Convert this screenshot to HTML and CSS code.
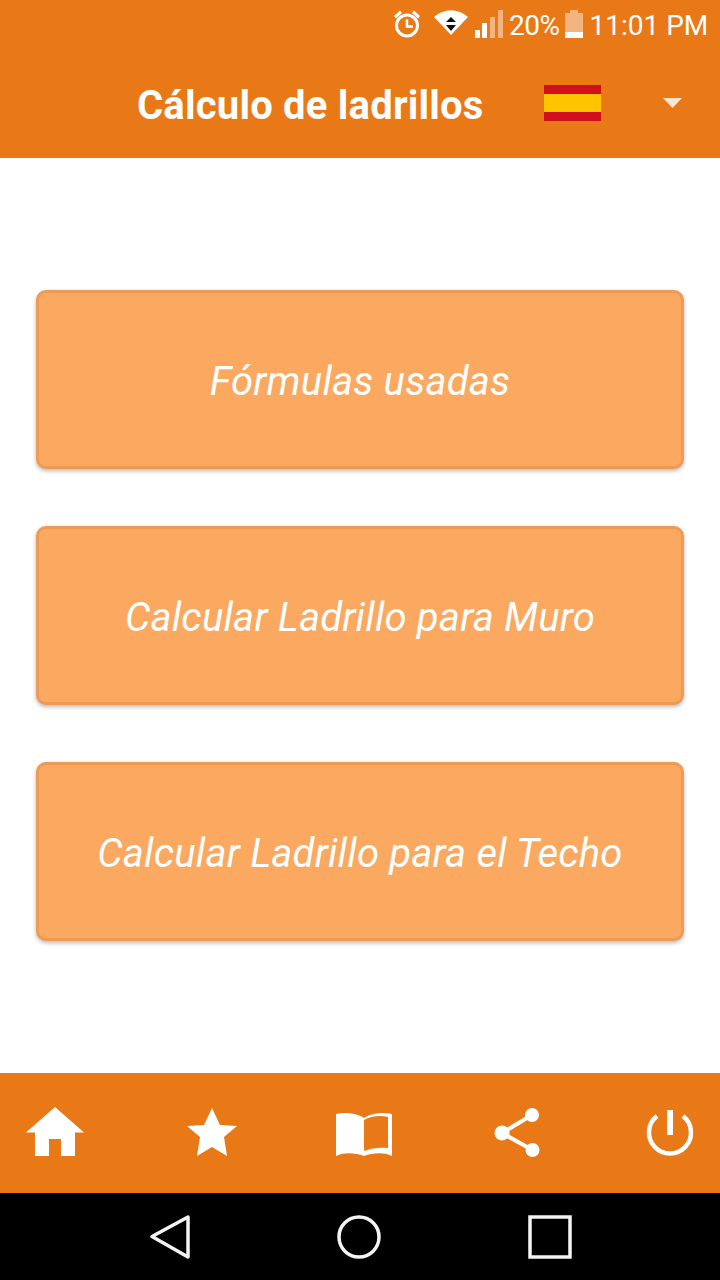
FILE: index.html
```html
<!DOCTYPE html>
<html lang="es">
<head>
<meta charset="utf-8">
<title>Cálculo de ladrillos</title>
<link rel="stylesheet" href="styles.css">
</head>
<body>
<div class="screen">
  <header class="header">
    <div class="status">
      <svg class="st-alarm" width="28" height="28" viewBox="0 0 28 28"><circle cx="14" cy="15.500" r="10.500" fill="none" stroke="#fff" stroke-width="3"/><path d="M14 9.500v7h6" fill="none" stroke="#fff" stroke-width="2.500"/><path d="M1 6 7 .5 9 3 3 8.500ZM27 6 21 .5 19 3 25 8.500Z" fill="#fff"/></svg>
      <svg class="st-wifi" width="34" height="26" viewBox="0 0 34 26"><path d="M0 7C10-2 24-2 34 7L17 25Z" fill="#fff"/><path d="M17 7l5 5H12ZM17 21l-5-6h10Z" fill="#111"/></svg>
      <svg class="st-signal" width="28" height="28" viewBox="0 0 28 28"><path d="M0 20h5v8H0ZM7 13h5v15H7Z" fill="#fff"/><path d="M15 7h5v21h-5ZM23 0h5v28h-5Z" fill="#fff" fill-opacity=".45"/></svg>
      <span class="st-text st-pct">20%</span>
      <svg class="st-battery" width="18" height="28" viewBox="0 0 18 28"><path d="M5 0h8v3h5v19H0V3h5Z" fill="#fff" fill-opacity=".45"/><path d="M0 22h18v6H0Z" fill="#fff"/></svg>
      <span class="st-text st-time">11:01 PM</span>
    </div>
    <div class="toolbar">
      <h1 class="title">Cálculo de ladrillos</h1>
      <div class="flag"><div class="flag-red"></div><div class="flag-yellow"></div><div class="flag-red"></div></div>
      <svg class="caret" width="19" height="10" viewBox="0 0 19 10"><path d="M0 0h19L9.500 10Z" fill="#fbe6d4"/></svg>
    </div>
  </header>
  <main class="main">
    <button class="action">Fórmulas usadas</button>
    <button class="action">Calcular Ladrillo para Muro</button>
    <button class="action">Calcular Ladrillo para el Techo</button>
  </main>
  <nav class="tabs">
    <svg class="tab" width="60" height="60" viewBox="0 0 60 60"><path fill-rule="evenodd" d="M30 4 59 29.500H50V53H10V29.500H1ZM24 36V53H36V36Z" fill="#fff"/></svg>
    <svg class="tab" width="60" height="60" viewBox="0 0 60 60"><path d="M34 5 42 22 59 23 46 34 49 53 34 44 19 53 22 34 9 23 26 22Z" fill="#fff"/></svg>
    <svg class="tab" width="60" height="60" viewBox="0 0 60 60"><path fill-rule="evenodd" d="M5 11C14 9 26 10 33 15 40 10 52 9 61 11V53C52 49 42 50 33 53 24 50 14 49 5 53ZM33 17V48C40 45 49 44 57 45V14C49 12 40 13 33 17Z" fill="#fff"/></svg>
    <svg class="tab" width="60" height="60" viewBox="0 0 60 60"><path d="M48 12 18 30 48.500 47" fill="none" stroke="#fff" stroke-width="4"/><circle cx="48" cy="12" r="7" fill="#fff"/><circle cx="18" cy="30" r="7.500" fill="#fff"/><circle cx="48.500" cy="47" r="7" fill="#fff"/></svg>
    <svg class="tab" width="60" height="60" viewBox="0 0 60 60"><path d="M20 13A21 21 0 1 0 46 13" fill="none" stroke="#fff" stroke-width="4.500"/><path d="M33 7V32" stroke="#fff" stroke-width="6"/></svg>
  </nav>
  <div class="sysnav">
    <svg width="44" height="44" viewBox="0 0 44 44"><path d="M4 21.500 40 2V42Z" fill="none" stroke="#f4f4f4" stroke-width="3.500" stroke-linejoin="round"/></svg>
    <svg width="44" height="44" viewBox="0 0 44 44"><circle cx="22" cy="22" r="20" fill="none" stroke="#f4f4f4" stroke-width="3.500"/></svg>
    <svg width="44" height="44" viewBox="0 0 44 44"><rect x="2" y="2" width="40" height="40" fill="none" stroke="#f4f4f4" stroke-width="3.500"/></svg>
  </div>
</div>
</body>
</html>
```
FILE: styles.css
```css
* { box-sizing: border-box; }
html, body { margin: 0; padding: 0; }
body { font-family: Roboto, "Liberation Sans", sans-serif; background: #fff; }
.screen { width: 720px; height: 1280px; display: flex; flex-direction: column; overflow: hidden; }
.header { height: 158px; background: #e97817; color: #fff; flex: none; }
.status { height: 50px; display: flex; align-items: flex-start; padding: 10px 0 0 393px; }
.st-text { font-size: 28px; line-height: 30px; margin-top: 1px; color: #fff; white-space: nowrap; }
.st-alarm { margin-right: 13px; }
.st-wifi { margin-right: 7px; }
.st-signal { margin-right: 6px; }
.st-pct { margin-right: 6px; letter-spacing: -.5px; }
.st-battery { margin-right: 6px; }
.toolbar { height: 108px; display: flex; align-items: flex-start; padding: 0 0 0 137px; }
.title { margin: 0; width: 407px; font-size: 40px; line-height: 46px; font-weight: 700; letter-spacing: .2px; padding-top: 33px; white-space: nowrap; }
.flag { width: 57px; height: 36px; margin-top: 35px; margin-right: 62px; display: flex; flex-direction: column; flex: none; }
.flag-red { height: 9px; background: #d0101a; }
.flag-yellow { height: 18px; background: #ffc400; }
.caret { margin-top: 48px; flex: none; }
.main { flex: 1; display: flex; flex-direction: column; gap: 57px; padding: 132px 36px 0; background: #fff; }
.action { height: 179px; background: #fba961; border: 3px solid #ee9a55; border-radius: 10px; box-shadow: 0 2px 4px rgba(0,0,0,.28); color: #fff; font-family: Roboto, "Liberation Sans", sans-serif; font-style: italic; font-size: 40px; letter-spacing: .2px; padding: 4px 0 0; }
.tabs { height: 120px; flex: none; background: #e97817; display: flex; align-items: center; gap: 93px; padding-left: 25px; }
.tab { flex: none; overflow: visible; }
.sysnav { height: 87px; flex: none; background: #000; display: flex; gap: 145px; padding: 22px 0 0 148px; align-items: flex-start; }
.sysnav svg:last-child { margin-left: 2px; }
```
